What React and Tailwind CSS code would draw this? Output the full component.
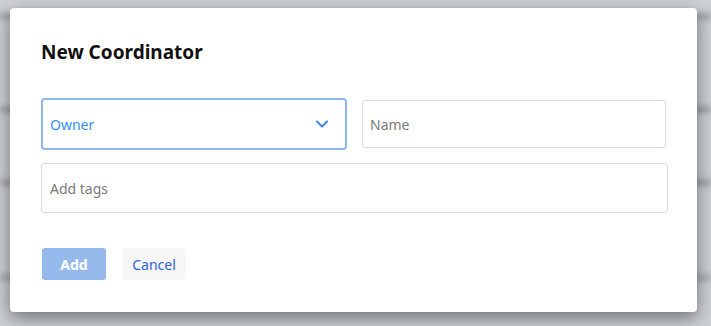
import React from 'react';

const font = { fontFamily: '"Noto Sans", "Open Sans", sans-serif' };

const App = () => {
  return (
    <div className="relative w-[711px] h-[326px] overflow-hidden bg-[#cdd0d4]" style={font}>
      {/* blurred page behind the modal */}
      <div className="flex flex-col pt-[14px] blur-[3px]">
        <div className="h-[5px] w-full bg-[#8e9196]" />
        <div className="h-[5px] w-full bg-[#8e9196] mt-[88px]" />
        <div className="h-[5px] w-full bg-[#8e9196] mt-[68px]" />
        <div className="h-[5px] w-full bg-[#9a9da2] mt-[90px]" />
      </div>

      <div className="absolute left-[10px] top-[8px] w-[687px] h-[304px] bg-white rounded-[4px] shadow-[0_6px_18px_rgba(0,0,0,0.45)] px-[31px] pt-[31px]">
        <h2 className="text-[19px] leading-[26px] font-bold text-[#111]">New Coordinator</h2>

        <div className="mt-[33px] flex items-center gap-[15px]">
          <div className="w-[307px] h-[52px] border-2 border-[#8db6ee] rounded-[4px] flex items-center justify-between pl-[7px] pr-[17px]">
            <span className="text-[14px] text-[#3391f2]">Owner</span>
            <svg width="12" height="8" viewBox="0 0 12 8" fill="none">
              <path d="M1 1.5L6 6.5L11 1.5" stroke="#3a86e8" strokeWidth="2" strokeLinecap="round" strokeLinejoin="round" />
            </svg>
          </div>
          <div className="w-[305px] h-[48px] border border-[#dcdcdc] rounded-[3px] flex items-center px-[7px]">
            <span className="text-[14px] text-[#7a7a7a]">Name</span>
          </div>
        </div>

        <div className="mt-[13px] w-[627px] h-[50px] border border-[#dcdcdc] rounded-[3px] flex items-center px-[8px]">
          <span className="text-[14px] text-[#7a7a7a]">Add tags</span>
        </div>

        <div className="mt-[35px] ml-[1px] flex gap-[16px]">
          <button className="w-[64px] h-[32px] rounded-[3px] bg-[#95b9ea] text-white text-[14px] font-bold">Add</button>
          <button className="w-[64px] h-[32px] rounded-[3px] bg-[#f6f6f7] text-[#2b63d9] text-[14px]">Cancel</button>
        </div>
      </div>
    </div>
  );
};

export default App;
